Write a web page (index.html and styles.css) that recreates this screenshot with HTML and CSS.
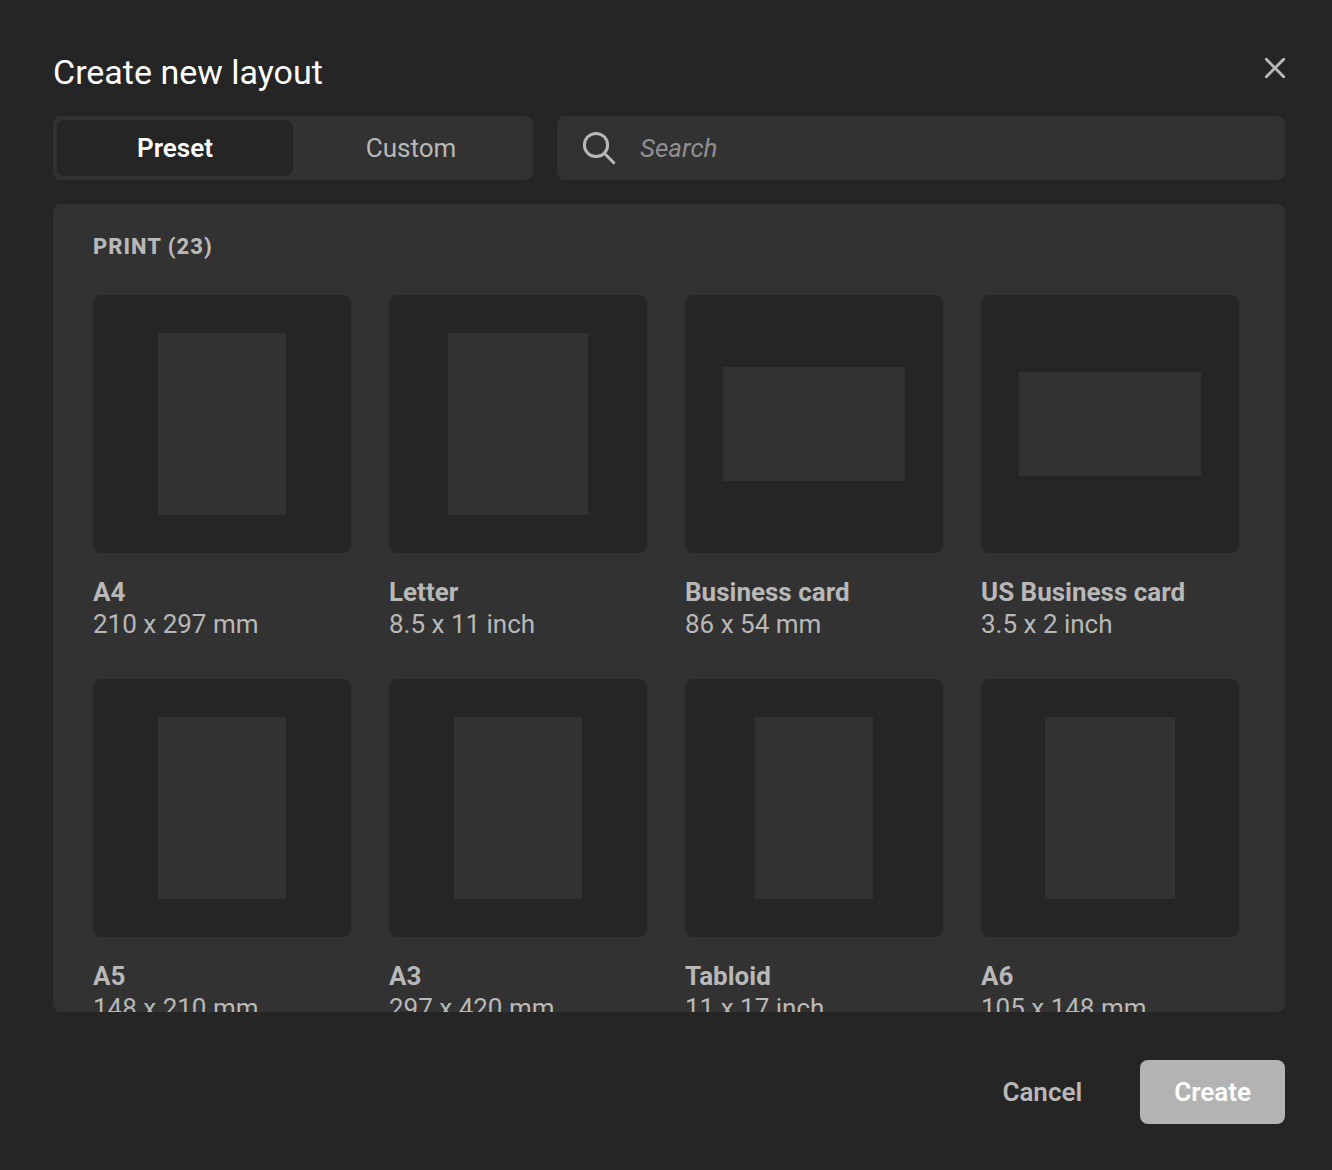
FILE: index.html
```html
<!DOCTYPE html>
<html lang="en">
<head>
<meta charset="utf-8">
<meta name="viewport" content="width=device-width, initial-scale=1">
<title>Create new layout</title>
<link rel="stylesheet" href="styles.css">
</head>
<body>
<main class="dialog">
  <header class="dialog-header">
    <h1 class="title">Create new layout</h1>
    <button class="close" type="button" aria-label="Close">
      <svg width="20" height="20" viewBox="0 0 20 20" fill="none" stroke="currentColor" stroke-width="3"><path d="M1 1 19 19M19 1 1 19" stroke-linecap="square"/></svg>
    </button>
  </header>

  <div class="toolbar">
    <div class="tabs" role="tablist">
      <button class="tab tab-active" type="button" role="tab" aria-selected="true">Preset</button>
      <button class="tab" type="button" role="tab" aria-selected="false">Custom</button>
    </div>
    <label class="search">
      <svg class="search-icon" width="34" height="34" viewBox="0 0 34 34" fill="none" stroke="currentColor" stroke-width="3"><circle cx="14" cy="14" r="11.6"/><path d="M22.3 22.3 31.8 31.8" stroke-linecap="round"/></svg>
      <input class="search-input" type="search" placeholder="Search" aria-label="Search">
    </label>
  </div>

  <section class="panel">
    <h2 class="group-title">PRINT (23)</h2>
    <div class="grid">
      <button class="preset" type="button"><span class="preview"><span class="sheet portrait" style="aspect-ratio: 210 / 297"></span></span><span class="caption"><strong class="name">A4</strong><span class="size">210 x 297 mm</span></span></button>
      <button class="preset" type="button"><span class="preview"><span class="sheet portrait" style="aspect-ratio: 85 / 110"></span></span><span class="caption"><strong class="name">Letter</strong><span class="size">8.5 x 11 inch</span></span></button>
      <button class="preset" type="button"><span class="preview"><span class="sheet landscape" style="aspect-ratio: 86 / 54"></span></span><span class="caption"><strong class="name">Business card</strong><span class="size">86 x 54 mm</span></span></button>
      <button class="preset" type="button"><span class="preview"><span class="sheet landscape" style="aspect-ratio: 35 / 20"></span></span><span class="caption"><strong class="name">US Business card</strong><span class="size">3.5 x 2 inch</span></span></button>
      <button class="preset" type="button"><span class="preview"><span class="sheet portrait" style="aspect-ratio: 148 / 210"></span></span><span class="caption"><strong class="name">A5</strong><span class="size">148 x 210 mm</span></span></button>
      <button class="preset" type="button"><span class="preview"><span class="sheet portrait" style="aspect-ratio: 297 / 420"></span></span><span class="caption"><strong class="name">A3</strong><span class="size">297 x 420 mm</span></span></button>
      <button class="preset" type="button"><span class="preview"><span class="sheet portrait" style="aspect-ratio: 11 / 17"></span></span><span class="caption"><strong class="name">Tabloid</strong><span class="size">11 x 17 inch</span></span></button>
      <button class="preset" type="button"><span class="preview"><span class="sheet portrait" style="aspect-ratio: 105 / 148"></span></span><span class="caption"><strong class="name">A6</strong><span class="size">105 x 148 mm</span></span></button>
    </div>
  </section>

  <footer class="actions">
    <button class="button" type="button">Cancel</button>
    <button class="button button-primary" type="button">Create</button>
  </footer>
</main>
</body>
</html>
```
FILE: styles.css
```css
* {
  box-sizing: border-box;
}

body {
  margin: 0;
  background: #252525;
  color: #b8b8b8;
  font: 26px/32px Roboto, "Liberation Sans", sans-serif;
}

button,
input {
  margin: 0;
  padding: 0;
  border: 0;
  background: none;
  color: inherit;
  font: inherit;
}

button {
  cursor: pointer;
}

.dialog {
  display: flex;
  flex-direction: column;
  height: 100vh;
  padding: 52px 47px 46px 53px;
}

.dialog-header {
  display: flex;
  justify-content: space-between;
  align-items: flex-start;
  margin-bottom: 24px;
}

.title {
  margin: 0;
  color: #fff;
  font-size: 34px;
  font-weight: 400;
  line-height: 40px;
}

.close {
  display: flex;
  padding: 6px 0;
}

.toolbar {
  display: grid;
  grid-template-columns: 480px 1fr;
  gap: 24px;
  margin-bottom: 24px;
}

.tabs {
  display: grid;
  grid-template-columns: 1fr 1fr;
  height: 64px;
  padding: 4px;
  border-radius: 8px;
  background: #323232;
}

.tab {
  border-radius: 8px;
}

.tab-active {
  background: #252525;
  color: #fff;
  font-weight: 600;
}

.search {
  display: flex;
  align-items: center;
  gap: 24px;
  padding: 0 25px;
  border-radius: 8px;
  background: #323232;
}

.search-icon {
  flex: none;
}

.search-input {
  flex: 1;
  min-width: 0;
  outline: 0;
  appearance: none;
}

.search-input::placeholder {
  color: #909090;
  font-style: italic;
  opacity: 1;
}

.panel {
  flex: 1;
  min-height: 0;
  padding: 27px 46px 40px 40px;
  overflow-y: auto;
  scrollbar-width: none;
  border-radius: 8px;
  background: #323232;
}

.group-title {
  margin: 0 0 32px;
  font-size: 22px;
  font-weight: 800;
  letter-spacing: 1px;
}

.grid {
  display: grid;
  grid-template-columns: repeat(4, 1fr);
  gap: 39px 38px;
}

.preset {
  display: flex;
  flex-direction: column;
  gap: 23px;
  text-align: left;
}

.preview {
  display: flex;
  align-items: center;
  justify-content: center;
  width: 100%;
  aspect-ratio: 1;
  padding: 38px;
  border-radius: 8px;
  background: #252525;
}

.sheet {
  background: #323232;
}

.portrait {
  height: 100%;
}

.landscape {
  width: 100%;
}

.caption {
  display: flex;
  flex-direction: column;
}

.name {
  font-weight: 700;
}

.actions {
  display: flex;
  justify-content: flex-end;
  gap: 24px;
  margin-top: 48px;
}

.button {
  height: 64px;
  padding: 0 34px;
  border-radius: 8px;
  font-weight: 600;
}

.button-primary {
  background: #b3b3b3;
  color: #fff;
}
```
